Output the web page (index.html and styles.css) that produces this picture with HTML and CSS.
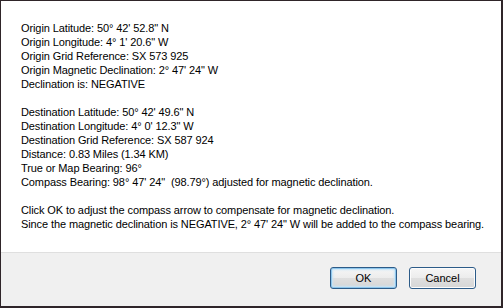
FILE: index.html
```html
<html lang="en">
<head>
  <meta charset="UTF-8">
  <title>Magnetic Declination</title>
  <link rel="stylesheet" href="styles.css">
</head>
<body>
  <div class="dialog">
    <div class="message">
      <p>
        Origin Latitude: 50° 42' 52.8" N<br>
        Origin Longitude: 4° 1' 20.6" W<br>
        Origin Grid Reference: SX 573 925<br>
        Origin Magnetic Declination: 2° 47' 24" W<br>
        Declination is: NEGATIVE
      </p>
      <p>
        Destination Latitude: 50° 42' 49.6" N<br>
        Destination Longitude: 4° 0' 12.3" W<br>
        Destination Grid Reference: SX 587 924<br>
        Distance: 0.83 Miles (1.34 KM)<br>
        True or Map Bearing: 96°<br>
        Compass Bearing: 98° 47' 24"&nbsp; (98.79°) adjusted for magnetic declination.
      </p>
      <p>
        Click OK to adjust the compass arrow to compensate for magnetic declination.<br>
        Since the magnetic declination is NEGATIVE, 2° 47' 24" W will be added to the compass bearing.
      </p>
    </div>
    <div class="footer">
      <button type="button" class="button default">OK</button>
      <button type="button" class="button">Cancel</button>
    </div>
  </div>
</body>
</html>
```
FILE: styles.css
```css
body, html {
  margin: 0;
  padding: 0;
}
body {
  background-color: #2f2529;
  padding: 1px 2px 2px 1px;
  font-family: "Liberation Sans", Arial, sans-serif;
  font-size: 11px;
  line-height: 14px;
  color: #000;
}
.dialog {
  width: 500px;
  height: 305px;
  display: flex;
  flex-direction: column;
  background-color: #fff;
}
.message {
  flex: 1;
  padding: 20px 0 0 20px;
  letter-spacing: -0.1px;
}
p {
  margin: 0 0 14px 0;
  white-space: nowrap;
}
.footer {
  height: 54px;
  box-sizing: border-box;
  border-top: 1px solid #dfdfdf;
  background-color: #f0f0f0;
  display: flex;
  justify-content: flex-end;
  align-items: flex-start;
  gap: 12px;
  padding: 14px 25px 0 0;
}
.button {
  width: 67px;
  height: 22px;
  box-sizing: border-box;
  border: 1px solid #2c5b88;
  border-radius: 3px;
  background: linear-gradient(#f6f6f6 0%, #ececec 50%, #dfdfdf 51%, #d6d6d6 100%);
  box-shadow: inset 0 0 0 1px #fcfcfc;
  font-family: "Liberation Sans", Arial, sans-serif;
  font-size: 11px;
  color: #000;
  padding: 0;
  outline: none;
}
.button.default {
  box-shadow: inset 0 0 0 1px #8ec6ec, inset 0 0 2px 2px #c6e4f7;
}
```
